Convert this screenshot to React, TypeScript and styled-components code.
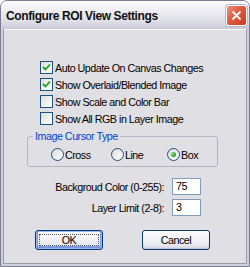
import React from "react";
import styled, { createGlobalStyle } from "styled-components";

const GlobalStyle = createGlobalStyle`
  html, body {
    margin: 0;
    padding: 0;
    background: #fff;
  }
  body {
    font-family: "Liberation Sans", Arial, sans-serif;
    font-size: 10.75px;
    letter-spacing: -0.5px;
    color: #000;
  }
`;

const Window = styled.div`
  width: 250px;
  height: 267px;
  box-sizing: border-box;
  display: flex;
  flex-direction: column;
  border: 1px solid #7d7e92;
  border-radius: 7px 7px 0 0;
  overflow: hidden;
  background: #e0dfe3;
`;

const TitleBar = styled.div`
  height: 28px;
  flex: none;
  display: flex;
  align-items: center;
  justify-content: space-between;
  padding: 0 2px 0 5px;
  background: linear-gradient(
    #ffffff 0%,
    #f2f2f6 25%,
    #e4e4ec 60%,
    #d4d4df 90%,
    #c4c4d2 100%
  );
`;

const Title = styled.div`
  font-weight: bold;
  font-size: 12px;
  letter-spacing: -0.4px;
  color: #101010;
  padding-top: 1px;
`;

const CloseButton = styled.div`
  width: 21px;
  height: 21px;
  box-sizing: border-box;
  border: 1px solid #ffffff;
  border-radius: 3px;
  background: linear-gradient(135deg, #f0907a 0%, #e05a40 45%, #c83a24 100%);
  box-shadow: 0 0 0 1px #b7b7c6;
  display: flex;
  align-items: center;
  justify-content: center;
`;

const Body = styled.div`
  flex: 1;
  display: flex;
  flex-direction: column;
  border: solid #cfcfda;
  border-width: 0 2px 2px;
  box-shadow: inset 1px 0 #9b9bad, inset -1px 0 #9b9bad, inset 0 -1px #9b9bad,
    inset 0 1px #ffffff;
  padding: 30px 0 0 0;
`;

const CheckList = styled.div`
  display: flex;
  flex-direction: column;
  padding-left: 37px;
`;

const CheckRow = styled.label`
  height: 17px;
  display: flex;
  align-items: center;
  gap: 2px;
  white-space: nowrap;
`;

const Box = styled.span`
  width: 13px;
  height: 13px;
  box-sizing: border-box;
  flex: none;
  border: 1px solid #1c5180;
  background: linear-gradient(135deg, #dcdcd7 0%, #f4f4f2 60%, #ffffff 100%);
  display: flex;
  align-items: center;
  justify-content: center;
`;

const Group = styled.fieldset`
  margin: 3px 0 0 24px;
  width: 191px;
  box-sizing: border-box;
  padding: 4px 0 4px 0;
  border: 1px solid #b4b4bf;
  border-radius: 3px;
`;

const Legend = styled.legend`
  margin-left: 5px;
  padding: 0 2px;
  color: #0046d5;
  line-height: 13px;
`;

const RadioRow = styled.div`
  display: grid;
  grid-template-columns: 60px 56px auto;
  padding-left: 23px;
  height: 15px;
  align-items: center;
`;

const RadioItem = styled.label`
  display: flex;
  align-items: center;
  gap: 1px;
`;

const RadioCircle = styled.span<{ $on?: boolean }>`
  width: 13px;
  height: 13px;
  box-sizing: border-box;
  flex: none;
  border-radius: 50%;
  border: 1px solid #1c5180;
  background: linear-gradient(135deg, #d8d8d2 0%, #f2f2f0 60%, #ffffff 100%);
  display: flex;
  align-items: center;
  justify-content: center;
  &::after {
    content: "";
    display: ${(p) => (p.$on ? "block" : "none")};
    width: 5px;
    height: 5px;
    border-radius: 50%;
    background: radial-gradient(circle at 35% 35%, #7ee07e, #21a121 70%);
  }
`;

const FieldGrid = styled.div`
  display: grid;
  grid-template-columns: 161px 29px;
  column-gap: 8px;
  row-gap: 4px;
  margin-top: 11px;
  align-items: center;
`;

const FieldLabel = styled.span`
  text-align: right;
  white-space: nowrap;
`;

const TextInput = styled.div`
  height: 17px;
  box-sizing: border-box;
  border: 1px solid #7f9db9;
  background: #fff;
  padding: 0 0 0 3px;
  line-height: 15px;
`;

const ButtonRow = styled.div`
  display: flex;
  gap: 39px;
  padding-left: 32px;
  margin-top: 14px;
`;

const Button = styled.div<{ $default?: boolean }>`
  width: 68px;
  height: 20px;
  box-sizing: border-box;
  border: 1px solid #003c74;
  border-radius: 3px;
  background: linear-gradient(#ffffff 0%, #f4f4f8 40%, #e6e6ee 80%, #d2d2de 100%);
  box-shadow: ${(p) =>
    p.$default
      ? "inset 0 0 0 1px #9ab6ea, inset 0 -1px 0 2px #7d98e0"
      : "inset 0 -1px 0 #c6c6d4"};
  display: flex;
  align-items: center;
  justify-content: center;
  position: relative;
`;

const FocusRing = styled.span`
  position: absolute;
  inset: 3px;
  border: 1px dotted #555;
`;

const CheckMark = () => (
  <svg width="9" height="9" viewBox="0 0 9 9">
    <path d="M1 4 L3.5 6.5 L8 1.5" stroke="#21a121" strokeWidth="1.8" fill="none" />
  </svg>
);

const CloseX = () => (
  <svg width="11" height="11" viewBox="0 0 11 11">
    <path d="M1.5 1.5 L9.5 9.5 M9.5 1.5 L1.5 9.5" stroke="#fff" strokeWidth="1.8" />
  </svg>
);

const checks = [
  { label: "Auto Update On Canvas Changes", on: true },
  { label: "Show Overlaid/Blended Image", on: true },
  { label: "Show Scale and Color Bar", on: false },
  { label: "Show All RGB in Layer Image", on: false },
];

const radios = [
  { label: "Cross", on: false },
  { label: "Line", on: false },
  { label: "Box", on: true },
];

export default function App() {
  return (
    <>
      <GlobalStyle />
      <Window>
        <TitleBar>
          <Title>Configure ROI View Settings</Title>
          <CloseButton>
            <CloseX />
          </CloseButton>
        </TitleBar>
        <Body>
          <CheckList>
            {checks.map((c) => (
              <CheckRow key={c.label}>
                <Box>{c.on && <CheckMark />}</Box>
                {c.label}
              </CheckRow>
            ))}
          </CheckList>
          <Group>
            <Legend>Image Cursor Type</Legend>
            <RadioRow>
              {radios.map((r) => (
                <RadioItem key={r.label}>
                  <RadioCircle $on={r.on} />
                  {r.label}
                </RadioItem>
              ))}
            </RadioRow>
          </Group>
          <FieldGrid>
            <FieldLabel>Backgroud Color (0-255):</FieldLabel>
            <TextInput>75</TextInput>
            <FieldLabel>Layer Limit (2-8):</FieldLabel>
            <TextInput>3</TextInput>
          </FieldGrid>
          <ButtonRow>
            <Button $default>
              <FocusRing />
              OK
            </Button>
            <Button>Cancel</Button>
          </ButtonRow>
        </Body>
      </Window>
    </>
  );
}
